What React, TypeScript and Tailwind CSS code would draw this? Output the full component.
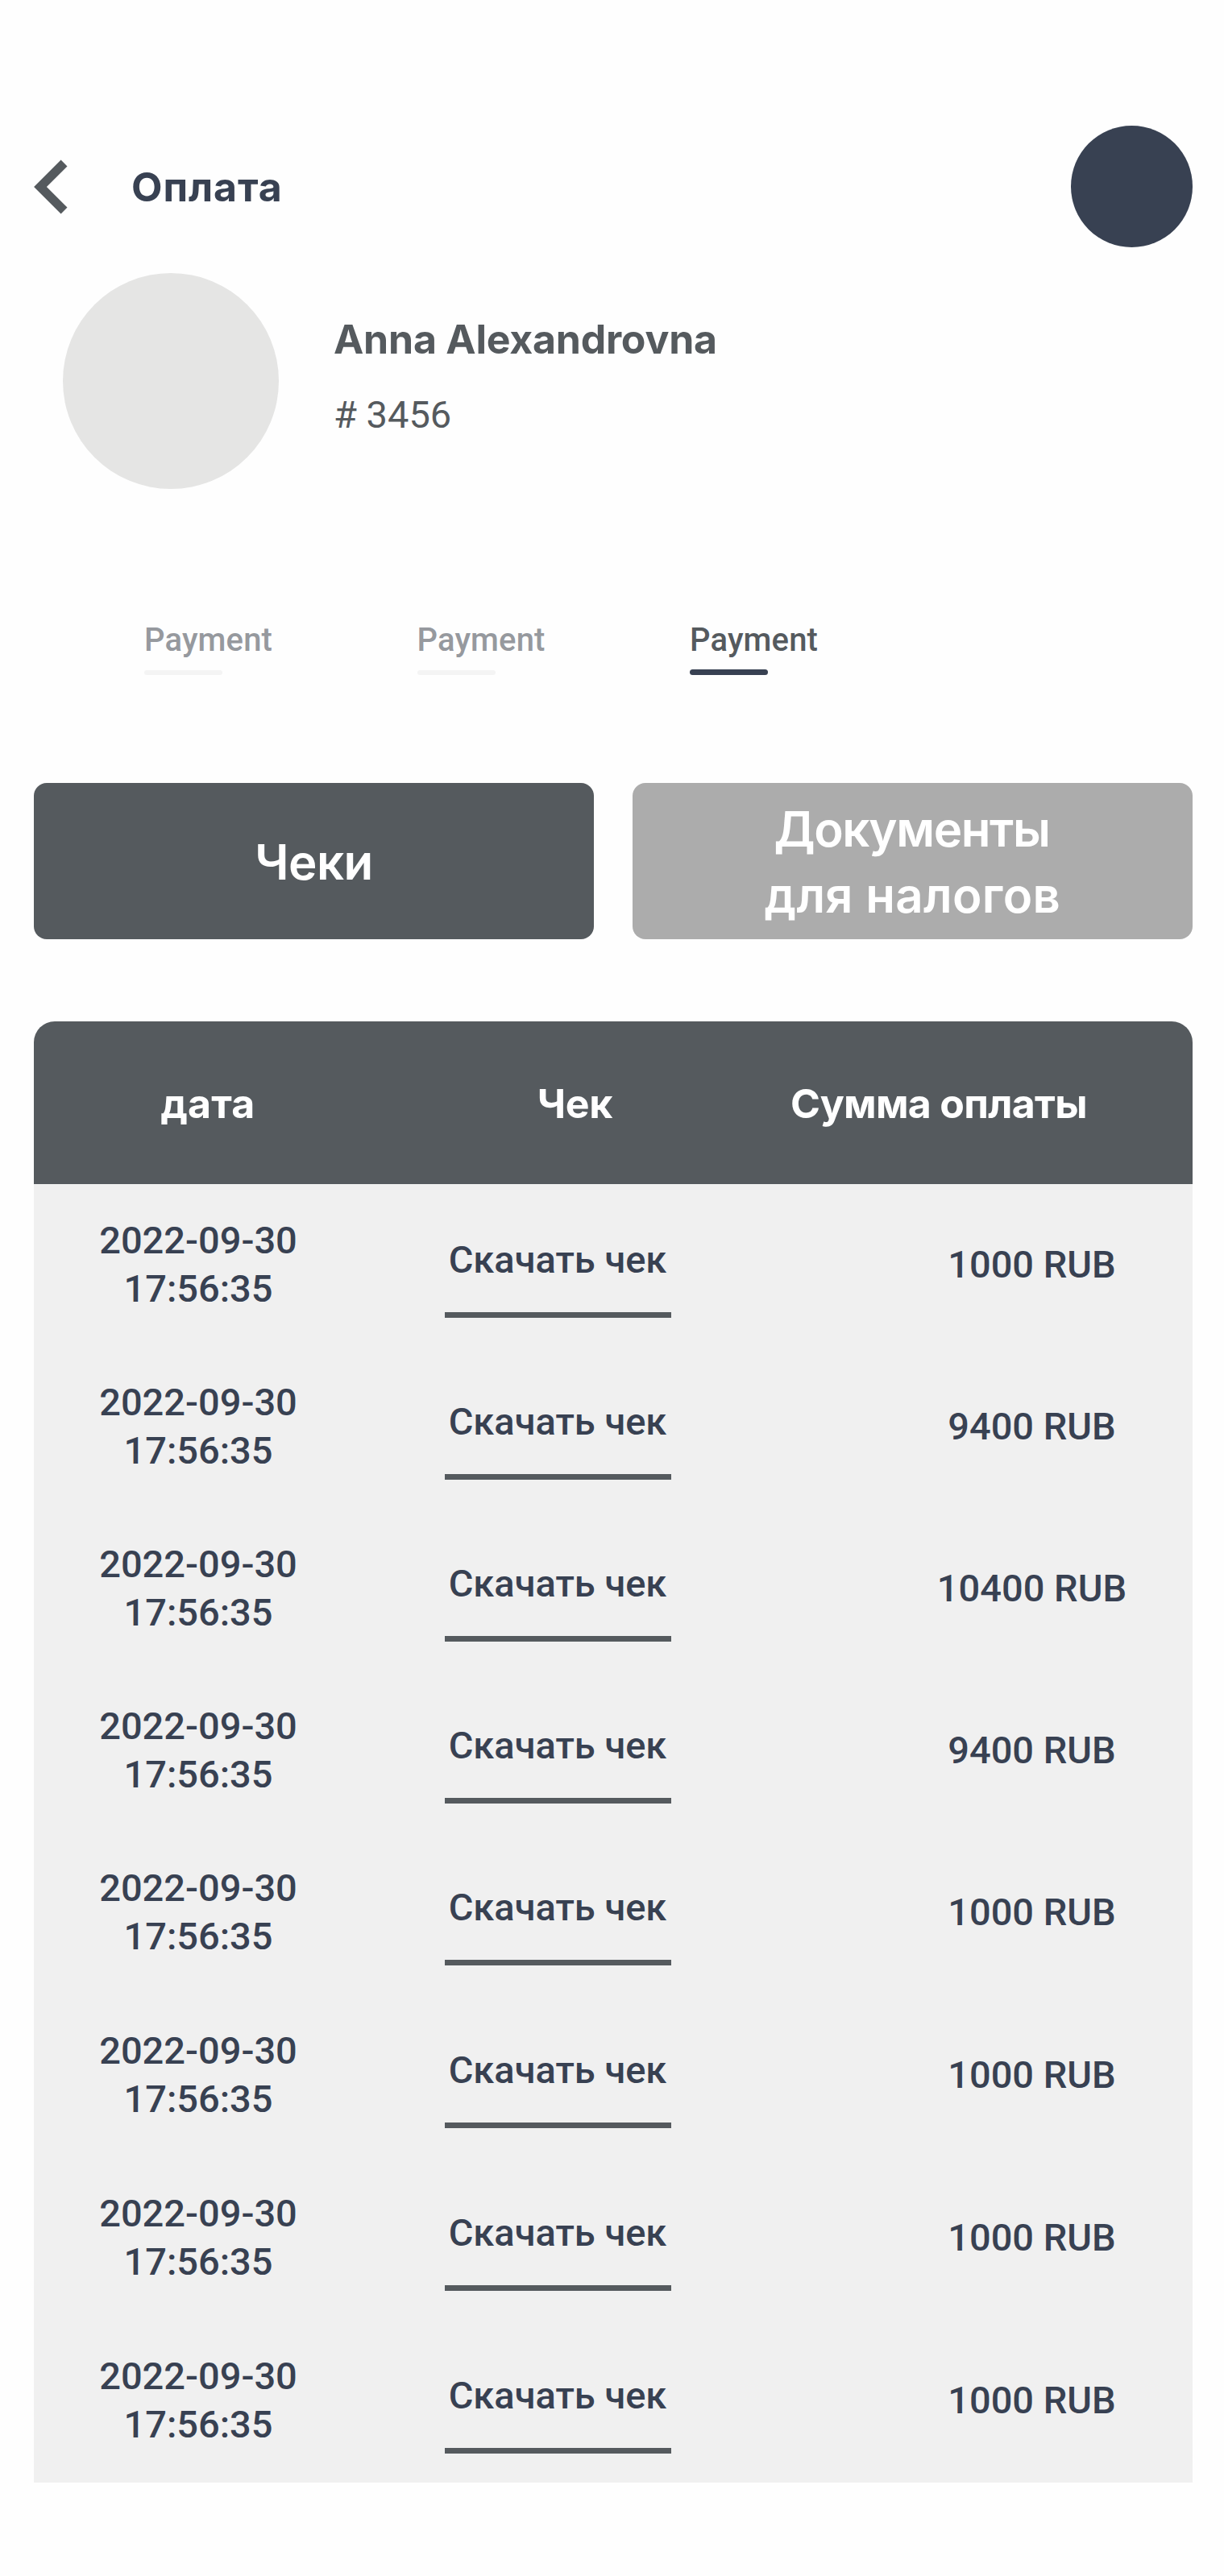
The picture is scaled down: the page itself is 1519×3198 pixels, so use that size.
type Payment = { date: string; time: string; amount: string };

const payments: Payment[] = [
  { date: "2022-09-30", time: "17:56:35", amount: "1000 RUB" },
  { date: "2022-09-30", time: "17:56:35", amount: "9400 RUB" },
  { date: "2022-09-30", time: "17:56:35", amount: "10400 RUB" },
  { date: "2022-09-30", time: "17:56:35", amount: "9400 RUB" },
  { date: "2022-09-30", time: "17:56:35", amount: "1000 RUB" },
  { date: "2022-09-30", time: "17:56:35", amount: "1000 RUB" },
  { date: "2022-09-30", time: "17:56:35", amount: "1000 RUB" },
  { date: "2022-09-30", time: "17:56:35", amount: "1000 RUB" },
];

const tabs = [
  { label: "Payment", active: false },
  { label: "Payment", active: false },
  { label: "Payment", active: true },
];

function Header() {
  return (
    <header className="flex h-[151px] items-center">
      <button aria-label="Назад" className="w-[121px]">
        <svg width="42" height="68" viewBox="0 0 42 68" fill="#555a5e">
          <path d="M33.6 0.5 L41.5 8.4 L15.9 34 L41.5 59.6 L33.6 67.5 L0.1 34 Z" />
        </svg>
      </button>
      <h1 className="pt-px text-[50px] leading-[60px] font-bold tracking-[0.9px] text-[#384152]">Оплата</h1>
      <div className="ml-auto size-[151px] rounded-full bg-[#384152]" />
    </header>
  );
}

function Profile() {
  return (
    <section className="mt-8 flex h-[268px] pl-9">
      <div className="size-[268px] rounded-full bg-[#e5e5e4]" />
      <div className="ml-[68px] pt-[52px] text-[#555a5e]">
        <h2 className="text-[50px] leading-[60px] font-bold tracking-[-0.23px]">Anna Alexandrovna</h2>
        <p className="mt-9 font-[Roboto] text-[47px] leading-[56px]"># 3456</p>
      </div>
    </section>
  );
}

function Tabs() {
  return (
    <nav className="mt-[164px] flex h-[201px] pl-[137px] font-[Roboto] text-[40px] leading-[48px] font-medium tracking-[0.15px]">
      {tabs.map((tab, i) => (
        <div key={i} className="w-[338.5px]">
          <div className={tab.active ? "text-[#555a5e]" : "text-[#96999e]"}>{tab.label}</div>
          <div
            className={
              tab.active
                ? "mt-3 h-[7px] w-[97px] rounded-[4px] bg-[#384152]"
                : "mt-[13px] h-[6px] w-[97px] rounded-[3px] bg-[#f4f4f4]"
            }
          />
        </div>
      ))}
    </nav>
  );
}

function Actions() {
  return (
    <div className="grid h-[194px] grid-cols-2 gap-12 text-[60px] leading-[82px] font-semibold text-white">
      <button className="rounded-2xl bg-[#555a5e] pt-[2px] tracking-[-0.6px]">Чеки</button>
      <button className="rounded-2xl bg-[#acacac] pt-[2px]">
        <span className="block pr-[2px] tracking-[-1.4px]">Документы</span>
        <span className="block tracking-[0.3px]">для налогов</span>
      </button>
    </div>
  );
}

function PaymentRow({ date, time, amount }: Payment) {
  return (
    <div className="flex h-[201px] text-center nth-[n+5]:h-[202px]">
      <div className="w-[408px] pt-10 leading-[60px]">
        <div>{date}</div>
        <div>{time}</div>
      </div>
      <div className="flex w-[484px] flex-col items-center pt-[66px] leading-[56px]">
        <a>Скачать чек</a>
        <div className="mt-[37px] h-[7px] w-[281px] bg-[#555a5e]" />
      </div>
      <div className="ml-[147px] flex-1 pt-[72px] leading-[56px]">{amount}</div>
    </div>
  );
}

function PaymentTable() {
  return (
    <section className="mt-[102px]">
      <div className="flex h-[202px] items-center rounded-t-[26px] bg-[#555a5e] pt-[2px] text-center text-[50px] leading-[60px] font-bold text-white">
        <div className="w-[432px] tracking-[0.2px]">дата</div>
        <div className="w-[479px] tracking-[-0.3px]">Чек</div>
        <div className="w-[424px] tracking-[-0.7px]">Сумма оплаты</div>
      </div>
      <div className="bg-[#f0f0f0] font-[Roboto] text-[47px] font-medium text-[#384152]">
        {payments.map((p, i) => (
          <PaymentRow key={i} {...p} />
        ))}
      </div>
    </section>
  );
}

export default function App() {
  return (
    <main className="h-[3198px] w-[1519px] overflow-hidden bg-[#fefefe] pt-[156px] pr-[39px] pl-[42px] font-[Inter,sans-serif]">
      <Header />
      <Profile />
      <Tabs />
      <Actions />
      <PaymentTable />
    </main>
  );
}
